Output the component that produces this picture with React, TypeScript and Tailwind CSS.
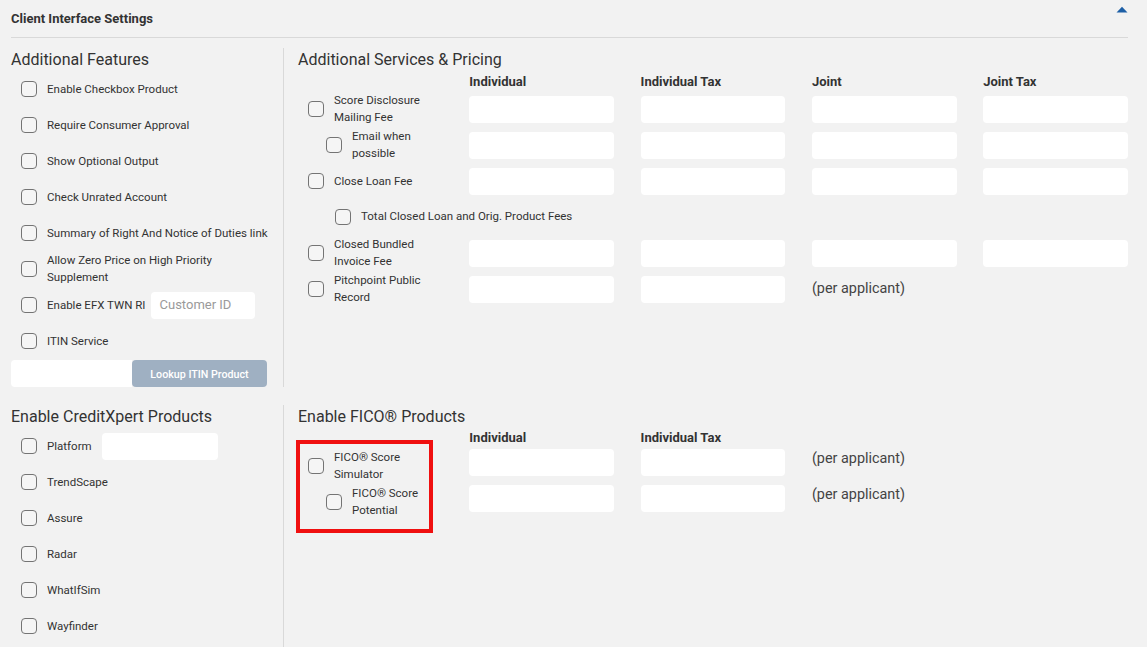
import type { ReactNode } from "react";

const Box = () => (
  <span className="block h-4 w-4 shrink-0 rounded-[4px] border border-[#747474] bg-[#f5f5f5]" />
);

const Field = ({ className = "" }: { className?: string }) => (
  <div className={`h-[27px] rounded-[4px] bg-white ${className}`} />
);

function CheckRow({ label, children }: { label: string; children?: ReactNode }) {
  return (
    <div className="flex h-9 items-center gap-[10px] pl-[10px]">
      <Box />
      <span className="text-[11.5px] leading-[17px]">{label}</span>
      {children}
    </div>
  );
}

// label cell inside the pricing grid
function PriceLabel({ label, nested = false }: { label: string; nested?: boolean }) {
  return (
    <div className={`flex h-9 items-center gap-[10px] ${nested ? "pl-[28px]" : "pl-[10px]"}`}>
      <Box />
      <span className="text-[11.5px] leading-[17px]">{label}</span>
    </div>
  );
}

const Cell = () => (
  <div className="flex h-9 items-center">
    <Field className="w-full" />
  </div>
);

const PerApplicant = ({ raised = false }: { raised?: boolean }) => (
  <div className={`flex h-9 items-center text-[14.4px] text-[#444] ${raised ? "pb-[6px]" : ""}`}>
    (per applicant)
  </div>
);

const Heading = ({ children }: { children: ReactNode }) => (
  <h2 className="h-[23px] text-[16px] leading-[23px] text-[#333]">{children}</h2>
);

const ColHead = ({ children }: { children?: ReactNode }) => (
  <div className="text-[13px] font-bold leading-[13px] text-[#333]">{children}</div>
);

export default function App() {
  return (
    <div className="min-h-screen bg-[#f2f2f2] font-['Roboto','Liberation_Sans',sans-serif] text-[#333]">
      <div className="pl-[11px] pr-[19px]">
        <div className="flex h-[38px] items-start justify-between border-b border-[#d9d9d9]">
          <h1 className="pt-[11px] text-[13px] font-bold leading-[16px]">Client Interface Settings</h1>
          <svg width="12" height="7" viewBox="0 0 12 7" className="mt-[6px] text-[#1d5fa6]">
            <path d="M0.5 6.5 L6 0.8 L11.5 6.5 Z" fill="currentColor" />
          </svg>
        </div>

        <div className="mt-[10px] grid grid-cols-[273px_1fr]">
          {/* Additional Features */}
          <div className="border-r border-[#d9d9d9] pr-[4px]">
            <Heading>Additional Features</Heading>
            <CheckRow label="Enable Checkbox Product" />
            <CheckRow label="Require Consumer Approval" />
            <CheckRow label="Show Optional Output" />
            <CheckRow label="Check Unrated Account" />
            <CheckRow label="Summary of Right And Notice of Duties link" />
            <div className="w-[250px]">
              <CheckRow label="Allow Zero Price on High Priority Supplement" />
            </div>
            <CheckRow label="Enable EFX TWN RI">
              <div className="-ml-[5px] flex h-[27px] w-[104px] items-center rounded-[4px] bg-white pl-[9px] text-[13px] text-[#9a9a9a]">
                Customer ID
              </div>
            </CheckRow>
            <CheckRow label="ITIN Service" />
            <div className="mt-px flex h-[27px] w-[256px]">
              <div className="h-full w-[121px] rounded-l-[4px] bg-white" />
              <button
                type="button"
                className="h-full flex-1 rounded-[4px] bg-[#9fb0c2] pt-[3px] text-[10.7px] font-medium text-white"
              >
                Lookup ITIN Product
              </button>
            </div>
          </div>

          {/* Additional Services & Pricing */}
          <div className="pl-[14px]">
            <Heading>Additional Services &amp; Pricing</Heading>
            <div className="grid grid-cols-5 gap-x-[26.5px]">
              <div className="h-5" />
              <div className="flex h-5 items-center pt-px"><ColHead>Individual</ColHead></div>
              <div className="flex h-5 items-center pt-px"><ColHead>Individual Tax</ColHead></div>
              <div className="flex h-5 items-center pt-px"><ColHead>Joint</ColHead></div>
              <div className="flex h-5 items-center pt-px"><ColHead>Joint Tax</ColHead></div>

              <PriceLabel label="Score Disclosure Mailing Fee" />
              <Cell /><Cell /><Cell /><Cell />

              <PriceLabel label="Email when possible" nested />
              <Cell /><Cell /><Cell /><Cell />

              <PriceLabel label="Close Loan Fee" />
              <Cell /><Cell /><Cell /><Cell />

              <div className="col-span-5 flex h-9 items-center gap-[10px] pl-[37px]">
                <Box />
                <span className="text-[11.5px]">Total Closed Loan and Orig. Product Fees</span>
              </div>

              <PriceLabel label="Closed Bundled Invoice Fee" />
              <Cell /><Cell /><Cell /><Cell />

              <PriceLabel label="Pitchpoint Public Record" />
              <Cell /><Cell />
              <PerApplicant />
              <div />
            </div>
          </div>

          {/* Enable CreditXpert Products */}
          <div className="mt-[18px] h-[242px] border-r border-[#d9d9d9] pr-[4px]">
            <Heading>Enable CreditXpert Products</Heading>
            <CheckRow label="Platform">
              <div className="h-[27px] w-[116px] rounded-[4px] bg-white" />
            </CheckRow>
            <CheckRow label="TrendScape" />
            <CheckRow label="Assure" />
            <CheckRow label="Radar" />
            <CheckRow label="WhatIfSim" />
            <CheckRow label="Wayfinder" />
          </div>

          {/* Enable FICO Products */}
          <div className="mt-[18px] pl-[14px]">
            <Heading>Enable FICO® Products</Heading>
            <div className="grid grid-cols-5 gap-x-[26.5px]">
              <div className="h-4" />
              <div className="flex h-4 items-end"><ColHead>Individual</ColHead></div>
              <div className="flex h-4 items-end"><ColHead>Individual Tax</ColHead></div>
              <div className="col-span-2" />

              <div className="row-span-2 -mt-[4px] -mb-[17px] -ml-[2px] h-[93px] w-[137px] border-4 border-[#f01010] pt-[4px]">
                <div className="flex h-9 items-center gap-[10px] pl-[8px]">
                  <Box />
                  <span className="text-[11.5px] leading-[17px]">FICO® Score Simulator</span>
                </div>
                <div className="flex h-9 items-center gap-[10px] pl-[26px]">
                  <Box />
                  <span className="text-[11.5px] leading-[17px]">FICO® Score Potential</span>
                </div>
              </div>
              <Cell /><Cell />
              <PerApplicant raised />
              <div />
              <Cell /><Cell />
              <PerApplicant raised />
              <div />
            </div>
          </div>
        </div>
      </div>
    </div>
  );
}
